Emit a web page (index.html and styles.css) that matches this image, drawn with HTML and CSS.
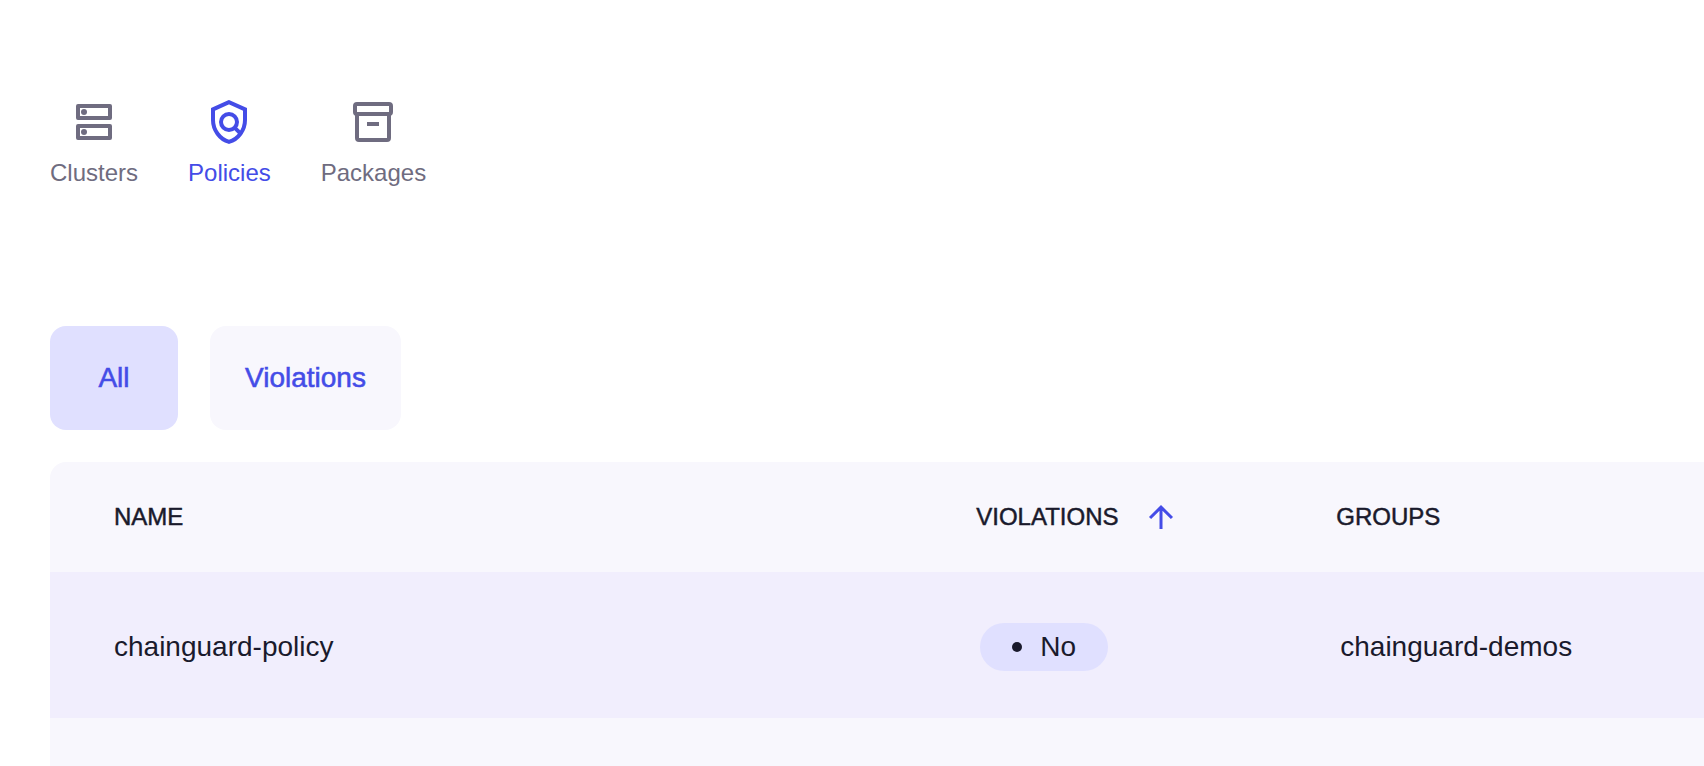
FILE: index.html
```html
<!DOCTYPE html>
<html lang="en">
<head>
<meta charset="utf-8">
<title>Policies</title>
<link rel="stylesheet" href="styles.css">
</head>
<body>
<div class="page">
  <nav class="nav" aria-label="Sections">
    <a class="nav-item" href="#clusters">
      <svg class="nav-icon" viewBox="0 0 24 24" fill="none" stroke="currentColor" stroke-width="2" stroke-linejoin="round" aria-hidden="true">
        <rect x="4" y="4" width="16" height="6"/>
        <rect x="4" y="14" width="16" height="6"/>
        <circle cx="7" cy="7" r="1.5" fill="currentColor" stroke="none"/>
        <circle cx="7" cy="17" r="1.5" fill="currentColor" stroke="none"/>
      </svg>
      <span>Clusters</span>
    </a>
    <a class="nav-item active" href="#policies" aria-current="page">
      <svg class="nav-icon" viewBox="0 0 24 24" fill="none" stroke="currentColor" stroke-width="2" aria-hidden="true">
        <path d="M12 2.1 4 5.65V11c0 5 3.4 9.7 8 10.95 4.6-1.25 8-5.95 8-10.95V5.65z"/>
        <circle cx="12" cy="12" r="4"/>
        <path d="m14.8 14.8 3.4 3.4"/>
      </svg>
      <span>Policies</span>
    </a>
    <a class="nav-item" href="#packages">
      <svg class="nav-icon" viewBox="0 0 24 24" fill="none" stroke="currentColor" stroke-width="2" aria-hidden="true">
        <rect x="3" y="3" width="18" height="5" rx="1"/>
        <path d="M4 8v12a1 1 0 0 0 1 1h14a1 1 0 0 0 1-1V8M9 13h6"/>
      </svg>
      <span>Packages</span>
    </a>
  </nav>

  <div class="filters">
    <button class="filter selected" type="button" aria-pressed="true">All</button>
    <button class="filter" type="button" aria-pressed="false">Violations</button>
  </div>

  <main class="panel">
    <table class="policies">
      <thead>
        <tr>
          <th class="col-name" scope="col">NAME</th>
          <th class="col-violations" scope="col" aria-sort="ascending">
            <button class="sort" type="button">
              <span>VIOLATIONS</span>
              <svg class="sort-icon" viewBox="0 0 24 24" fill="none" stroke="currentColor" stroke-width="2" aria-hidden="true">
                <path d="M12 20V5M4.7 12.7 12 5.4l7.3 7.3"/>
              </svg>
            </button>
          </th>
          <th scope="col">GROUPS</th>
        </tr>
      </thead>
      <tbody>
        <tr>
          <td class="col-name">chainguard-policy</td>
          <td><span class="pill"><span class="dot"></span>No</span></td>
          <td>chainguard-demos</td>
        </tr>
      </tbody>
    </table>
  </main>
</div>
</body>
</html>
```
FILE: styles.css
```css
* {
  box-sizing: border-box;
}

body {
  margin: 0;
  background: #fff;
  color: #1a1a2c;
  font-family: "Liberation Sans", Arial, Helvetica, sans-serif;
  font-size: 28px;
  line-height: 40px;
}

.page {
  display: flex;
  flex-direction: column;
  min-height: 100vh;
  padding: 98px 0 0 50px;
}

.nav {
  display: flex;
  gap: 50px;
  margin-bottom: 137px;
}

.nav-item {
  display: flex;
  flex-direction: column;
  align-items: center;
  gap: 11px;
  color: #6f6c80;
  font-size: 24px;
  line-height: 32px;
  text-decoration: none;
}

.nav-item.active {
  color: #444ce7;
}

.nav-icon {
  width: 48px;
  height: 48px;
}

.filters {
  display: flex;
  gap: 32px;
  margin-bottom: 32px;
}

.filter {
  min-width: 128px;
  padding: 32px 35px;
  border: 0;
  border-radius: 16px;
  background: #f8f7fd;
  color: #444ce7;
  font: inherit;
  -webkit-text-stroke: 0.02em currentColor;
}

.filter.selected {
  background: #e0e0ff;
}

.panel {
  flex: 1;
  border-top-left-radius: 16px;
  background: #f8f7fd;
}

.policies {
  width: 100%;
  border-collapse: collapse;
  table-layout: fixed;
}

.policies th {
  height: 110px;
  padding: 0;
  font-size: 24px;
  font-weight: 400;
  line-height: 32px;
  text-align: left;
  -webkit-text-stroke: 0.02em currentColor;
}

.policies td {
  height: 146px;
  padding: 4px 0 0 4px;
  background: #f1eefd;
}

.policies .col-name {
  width: 56%;
  padding-left: 64px;
}

.policies .col-violations {
  width: 360px;
}

.sort {
  display: flex;
  align-items: center;
  gap: 24px;
  padding: 0;
  border: 0;
  background: none;
  color: inherit;
  font: inherit;
  -webkit-text-stroke: inherit;
}

.sort-icon {
  width: 36px;
  height: 36px;
  color: #444ce7;
}

.pill {
  display: inline-flex;
  align-items: center;
  gap: 18px;
  min-width: 128px;
  height: 48px;
  padding: 0 32px;
  border-radius: 24px;
  background: #e0e0ff;
}

.dot {
  width: 10px;
  height: 10px;
  border-radius: 50%;
  background: #1a1a2c;
}
```
